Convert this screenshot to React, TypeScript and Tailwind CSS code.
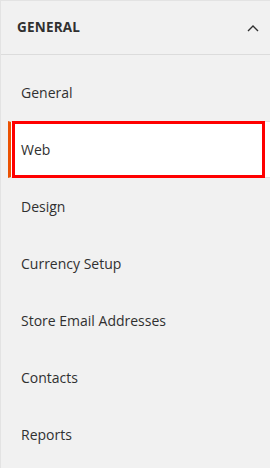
const items = [
  "General",
  "Web",
  "Design",
  "Currency Setup",
  "Store Email Addresses",
  "Contacts",
  "Reports",
]

export default function App() {
  return (
    <div
      className="h-[468px] w-[270px] overflow-hidden border-l border-t border-[#e3e3e3] bg-[#f1f1f1] text-[#303030]"
      style={{ fontFamily: '"Open Sans", "Noto Sans", sans-serif' }}
    >
      <div className="flex h-[54px] items-center justify-between border-b border-[#dcdcdc] pl-[16px] pr-[11px]">
        <span className="text-[13.5px] font-bold tracking-[0.2px] text-[#303030]">GENERAL</span>
        <svg width="12" height="8" viewBox="0 0 12 8" className="mt-[1px]">
          <polyline points="1,7 6,2 11,7" fill="none" stroke="#303030" strokeWidth="1.4" />
        </svg>
      </div>
      <ul className="pt-[9px]">
        {items.map((item) =>
          item === "Web" ? (
            <li
              key={item}
              className="relative ml-[7px] flex h-[57px] items-center border-y border-l-[3px] border-y-[#e3e3e3] border-l-[#eb5202] bg-white pl-[10px] text-[14px] font-medium"
            >
              {item}
              <div className="absolute -top-px -bottom-px left-[1px] right-[5px] border-[3px] border-[#ff0000]" />
            </li>
          ) : (
            <li key={item} className="flex h-[57px] items-center pl-[20px] text-[14px]">
              {item}
            </li>
          )
        )}
      </ul>
    </div>
  )
}
